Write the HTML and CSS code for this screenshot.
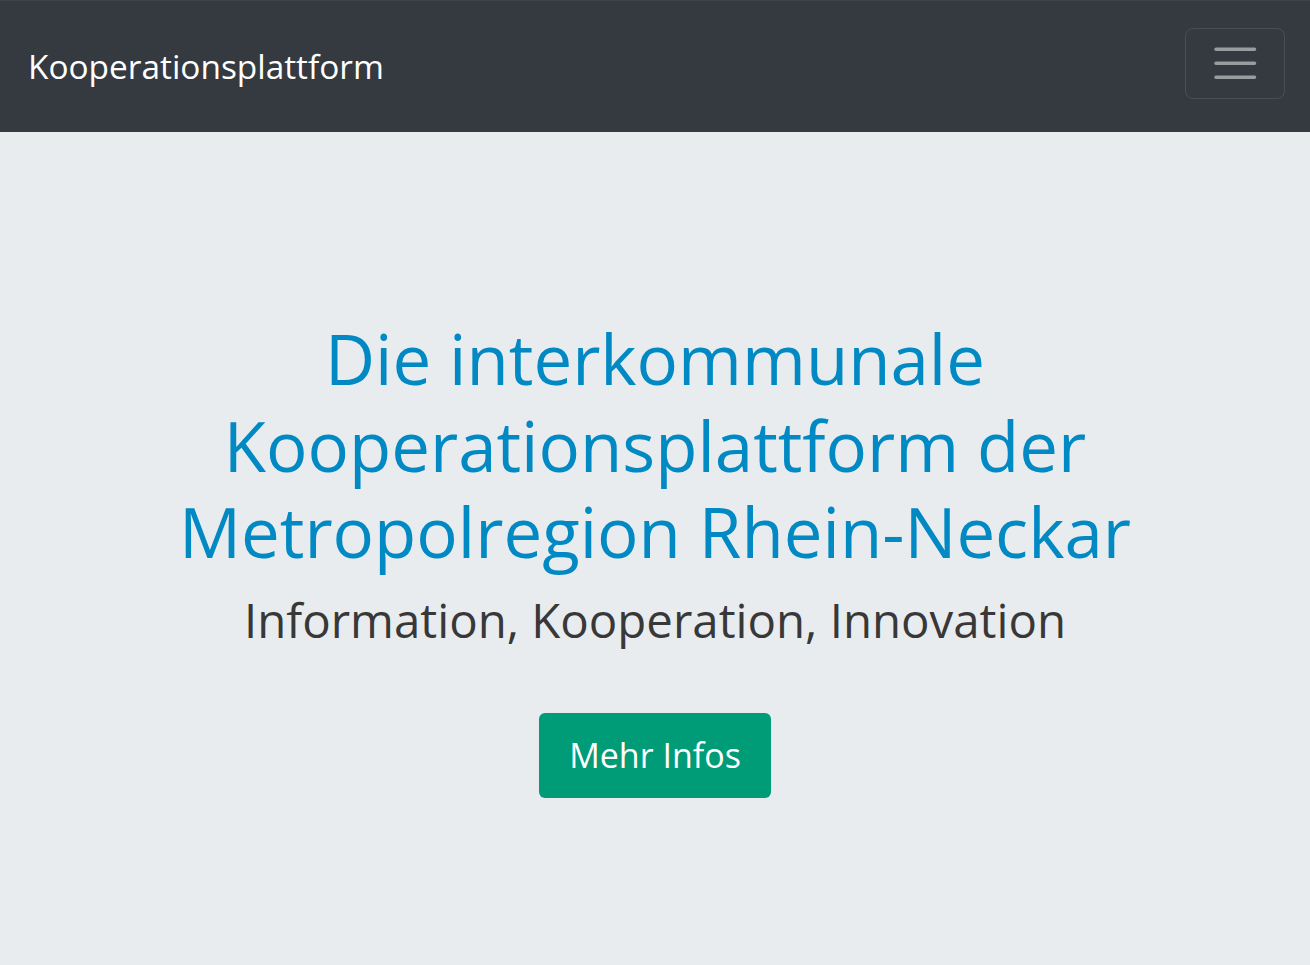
FILE: index.html
```html
<!DOCTYPE html>
<html lang="de">
<head>
<meta charset="utf-8">
<title>Kooperationsplattform</title>
<link rel="stylesheet" href="styles.css">
</head>
<body>
<nav class="navbar">
  <a class="brand" href="#">Kooperationsplattform</a>
  <button class="toggler" type="button" aria-label="Navigation umschalten">
    <svg class="toggler-icon" viewBox="0 0 30 30" aria-hidden="true">
      <path d="M4 7h22M4 15h22M4 23h22" stroke="rgba(255,255,255,0.5)" stroke-width="2" stroke-linecap="round" stroke-miterlimit="10" fill="none"/>
    </svg>
  </button>
</nav>
<main class="hero">
  <h1 class="hero-title">Die interkommunale<br>Kooperationsplattform der<br>Metropolregion Rhein-Neckar</h1>
  <p class="hero-sub">Information, Kooperation, Innovation</p>
  <a class="btn" href="#">Mehr Infos</a>
</main>
</body>
</html>
```
FILE: styles.css
```css
* { box-sizing: border-box; }
html, body { margin: 0; padding: 0; }
body {
  font-family: "Open Sans", "Noto Sans", sans-serif;
  background: #e9ecef;
  min-height: 965px;
}
.navbar {
  height: 132px;
  background: #343a40;
  border-top: 1px solid #3f454b;
  display: flex;
  align-items: center;
  justify-content: space-between;
  padding: 0 25px 0 28px;
}
.brand {
  color: #fff;
  text-decoration: none;
  font-size: 33.4px;
  line-height: 1.5;
}
.toggler {
  display: flex;
  align-items: center;
  justify-content: center;
  width: 100px;
  height: 71px;
  margin-bottom: 6px;
  padding: 0;
  background: transparent;
  border: 1.75px solid rgba(255,255,255,0.1);
  border-radius: 8px;
}
.toggler-icon {
  width: 52.5px;
  height: 52.5px;
  display: block;
}
.hero {
  display: flex;
  flex-direction: column;
  align-items: center;
  text-align: center;
  padding-top: 183px;
}
.hero-title {
  margin: 0;
  font-weight: 400;
  font-size: 69px;
  line-height: 86.5px;
  color: #0189c4;
}
.hero-sub {
  margin: 16px 0 0;
  font-size: 47.4px;
  line-height: 58px;
  color: #383838;
}
.btn {
  margin-top: 64px;
  display: inline-flex;
  align-items: center;
  justify-content: center;
  width: 232px;
  height: 85px;
  background: #009b77;
  color: #fff;
  text-decoration: none;
  font-size: 34px;
  border-radius: 6px;
}
```
